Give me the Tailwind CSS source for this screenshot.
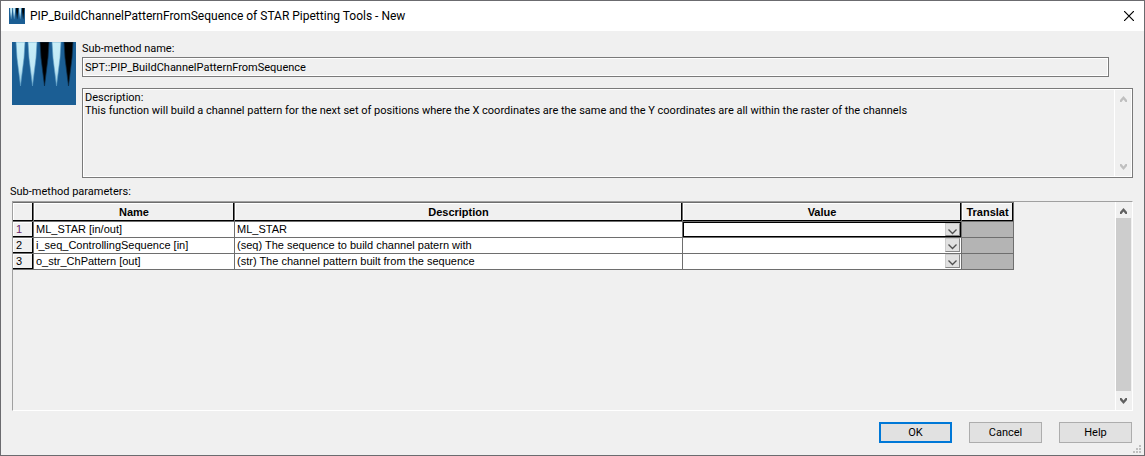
<!DOCTYPE html>
<html lang="en">
  <head>
    <meta charset="UTF-8" />
    <meta name="viewport" content="width=device-width, initial-scale=1.0" />
    <title>PIP_BuildChannelPatternFromSequence of STAR Pipetting Tools - New</title>
    <script src="https://cdn.jsdelivr.net/npm/@tailwindcss/browser@4"></script>
  </head>
  <body class="min-h-screen flex flex-col border border-[#6b6b6f] bg-[#f0f0f0] text-black text-[11px] leading-4 font-['Roboto',sans-serif]">
    <!-- Shared shapes -->
    <svg class="absolute size-0" aria-hidden="true">
      <defs>
        <linearGradient id="ice" x1="0" y1="0" x2="0" y2="1">
          <stop offset="0" stop-color="#c8eef8" />
          <stop offset="0.6" stop-color="#c0e8f5" />
          <stop offset="1" stop-color="#8fc4de" />
        </linearGradient>
        <symbol id="logo" viewBox="0 0 64 63" preserveAspectRatio="none">
          <rect width="64" height="63" fill="#1b5e94" />
          <path d="M4 0h9L12 16 8.500 44 5 16zM16 0h9L24 16 20.500 44 17 16zM40 0h9L48 16 44.500 44 41 16z" fill="url(#ice)" stroke="#5b9cc4" stroke-opacity="0.600" />
          <path d="M28 0h9L36 16 32.500 44 29 16zM52 0h9L60 16 56.500 44 53 16z" fill="#000" stroke="#0b2c47" stroke-opacity="0.700" />
        </symbol>
        <symbol id="up" viewBox="0 0 7 6">
          <path d="M0 4L3.500 0 7 4V6H5.500L3.500 3.500 1.500 6H0z" fill="currentColor" />
        </symbol>
        <symbol id="down" viewBox="0 0 7 6">
          <path d="M0 2L3.500 6 7 2V0H5.500L3.500 2.500 1.500 0H0z" fill="currentColor" />
        </symbol>
        <symbol id="drop" viewBox="0 0 9 6">
          <path d="M0.500 0.500L4.500 4.500 8.500 0.500" fill="none" stroke="#505050" stroke-width="1.300" />
        </symbol>
      </defs>
    </svg>

    <!-- Title bar -->
    <header class="flex h-[30px] items-center bg-white pl-2 pr-[10px]">
      <svg class="size-4"><use href="#logo" /></svg>
      <h1 class="ml-[5px] flex-1 text-[12px]">PIP_BuildChannelPatternFromSequence of STAR Pipetting Tools - New</h1>
      <button type="button" aria-label="Close">
        <svg class="size-[10px]" viewBox="0 0 10 10"><path d="M0 0L10 10M10 0L0 10" stroke="#000" stroke-width="1.200" /></svg>
      </button>
    </header>

    <main class="flex flex-1 flex-col pl-[11px] pr-[11px] pt-[10px]">
      <!-- Method name and description -->
      <section class="flex gap-[6px]">
        <svg class="mt-px h-[63px] w-16 shrink-0"><use href="#logo" /></svg>
        <div class="flex-1">
          <label for="methodName" class="block">Sub-method name:</label>
          <div class="pr-6">
            <input id="methodName" type="text" readonly value="SPT::PIP_BuildChannelPatternFromSequence"
              class="block h-5 w-full border border-[#7a7a7a] bg-[#f0f0f0] px-[2px] shadow-[inset_0_0_0_1px_#fff] outline-none" />
          </div>
          <div class="mt-[11px] flex h-[90px] border border-[#7a7a7a] shadow-[inset_0_0_0_1px_#fff]">
            <textarea readonly aria-label="Description" class="block flex-1 resize-none overflow-hidden px-[2px] pt-[2px] leading-[13px] outline-none">Description:
This function will build a channel pattern for the next set of positions where the X coordinates are the same and the Y coordinates are all within the raster of the channels</textarea>
            <div class="flex w-[18px] flex-col items-center justify-between border-l border-white py-[7px] text-[#bfbfbf]">
              <svg class="h-[6px] w-[7px]"><use href="#up" /></svg>
              <svg class="h-[6px] w-[7px]"><use href="#down" /></svg>
            </div>
          </div>
        </div>
      </section>

      <!-- Parameters -->
      <h2 class="-ml-[2px] mt-[6px] mb-px">Sub-method parameters:</h2>
      <section class="flex min-h-[210px] border border-b-white border-l-[#a0a0a0] border-r-white border-t-[#a0a0a0]">
        <div class="flex-1">
          <table class="w-[1001px] table-fixed border-separate border-spacing-0 font-['Liberation_Sans',sans-serif] text-[11px] leading-[15px] [&_td]:h-4 [&_td]:border-b [&_td]:border-r [&_td]:border-[#6e6e6e] [&_td]:p-0">
            <colgroup>
              <col class="w-[21px]" />
              <col class="w-[201px]" />
              <col class="w-[448px]" />
              <col class="w-[279px]" />
              <col class="w-[52px]" />
            </colgroup>
            <thead>
              <tr class="[&>*]:h-5 [&>*]:border-y [&>*]:border-r [&>*]:border-[#6e6e6e] [&>*]:p-0 [&>*]:shadow-[inset_-1px_-1px_#000,inset_1px_1px_#fff]">
                <td></td>
                <th>Name</th>
                <th>Description</th>
                <th>Value</th>
                <th>Translat</th>
              </tr>
            </thead>
            <tbody class="bg-white [&_th]:border-b [&_th]:border-r [&_th]:border-[#6e6e6e] [&_th]:bg-[#f0f0f0] [&_th]:p-0 [&_th]:pl-[3px] [&_th]:text-left [&_th]:font-normal [&_th]:shadow-[inset_-1px_-1px_#000,inset_1px_1px_#fff]">
              <tr>
                <th class="text-[#6b1f6b]">1</th>
                <td><span class="pl-[2px]">ML_STAR [in/out]</span></td>
                <td><span class="pl-[2px]">ML_STAR</span></td>
                <td>
                  <div class="flex h-[15px] border border-black">
                    <input type="text" aria-label="Value of ML_STAR" class="h-[13px] min-w-0 flex-1 outline-none" />
                    <button type="button" aria-label="Choose ML_STAR" class="flex h-[13px] w-[15px] items-center justify-center border border-[#888] border-l-[#ccc] border-t-[#ccc] bg-[#e1e1e1] pt-1"><svg class="h-[6px] w-[9px]"><use href="#drop" /></svg></button>
                  </div>
                </td>
                <td class="bg-[#b4b4b4]"></td>
              </tr>
              <tr>
                <th>2</th>
                <td><span class="pl-[2px]">i_seq_ControllingSequence [in]</span></td>
                <td><span class="pl-[2px]">(seq) The sequence to build channel patern with</span></td>
                <td>
                  <div class="flex h-[15px] pr-px">
                    <input type="text" aria-label="Value of i_seq_ControllingSequence" class="h-[13px] min-w-0 flex-1 outline-none" />
                    <button type="button" aria-label="Choose i_seq_ControllingSequence" class="flex h-[14px] w-[15px] items-center justify-center border border-[#888] border-l-[#ccc] border-t-[#ccc] bg-[#e1e1e1] pt-1"><svg class="h-[6px] w-[9px]"><use href="#drop" /></svg></button>
                  </div>
                </td>
                <td class="bg-[#b4b4b4]"></td>
              </tr>
              <tr>
                <th>3</th>
                <td><span class="pl-[2px]">o_str_ChPattern [out]</span></td>
                <td><span class="pl-[2px]">(str) The channel pattern built from the sequence</span></td>
                <td>
                  <div class="flex h-[15px] pr-px">
                    <input type="text" aria-label="Value of o_str_ChPattern" class="h-[13px] min-w-0 flex-1 outline-none" />
                    <button type="button" aria-label="Choose o_str_ChPattern" class="flex h-[14px] w-[15px] items-center justify-center border border-[#888] border-l-[#ccc] border-t-[#ccc] bg-[#e1e1e1] pt-1"><svg class="h-[6px] w-[9px]"><use href="#drop" /></svg></button>
                  </div>
                </td>
                <td class="bg-[#b4b4b4]"></td>
              </tr>
            </tbody>
          </table>
        </div>
        <!-- Scroll bar -->
        <div class="flex w-[17px] flex-col items-center border-l border-white pr-px pt-[6px] pb-[6px] text-[#606060]">
          <svg class="h-[6px] w-[7px] shrink-0"><use href="#up" /></svg>
          <div class="my-1 w-full flex-1 bg-[#cdcdcd]"></div>
          <svg class="mt-[3px] h-[6px] w-[7px] shrink-0"><use href="#down" /></svg>
        </div>
      </section>

      <!-- Dialog buttons -->
      <footer class="mt-[11px] flex justify-end gap-[17px] pr-px">
        <button type="button" class="h-[21px] w-[73px] border-2 border-[#0078d7] bg-[#e1e1e1] leading-[17px]">OK</button>
        <button type="button" class="h-[21px] w-[73px] border border-[#adadad] bg-[#e1e1e1]">Cancel</button>
        <button type="button" class="h-[21px] w-[73px] border border-[#adadad] bg-[#e1e1e1]">Help</button>
      </footer>
    </main>
    <!-- Resize grip -->
    <svg class="fixed bottom-[3px] right-[4px] h-2 w-2" viewBox="0 0 8 8" fill="#bfbfbf">
      <path d="M6 0h2v2H6zM6 3h2v2H6zM3 3h2v2H3zM6 6h2v2H6zM3 6h2v2H3zM0 6h2v2H0z" />
    </svg>
  </body>
</html>
